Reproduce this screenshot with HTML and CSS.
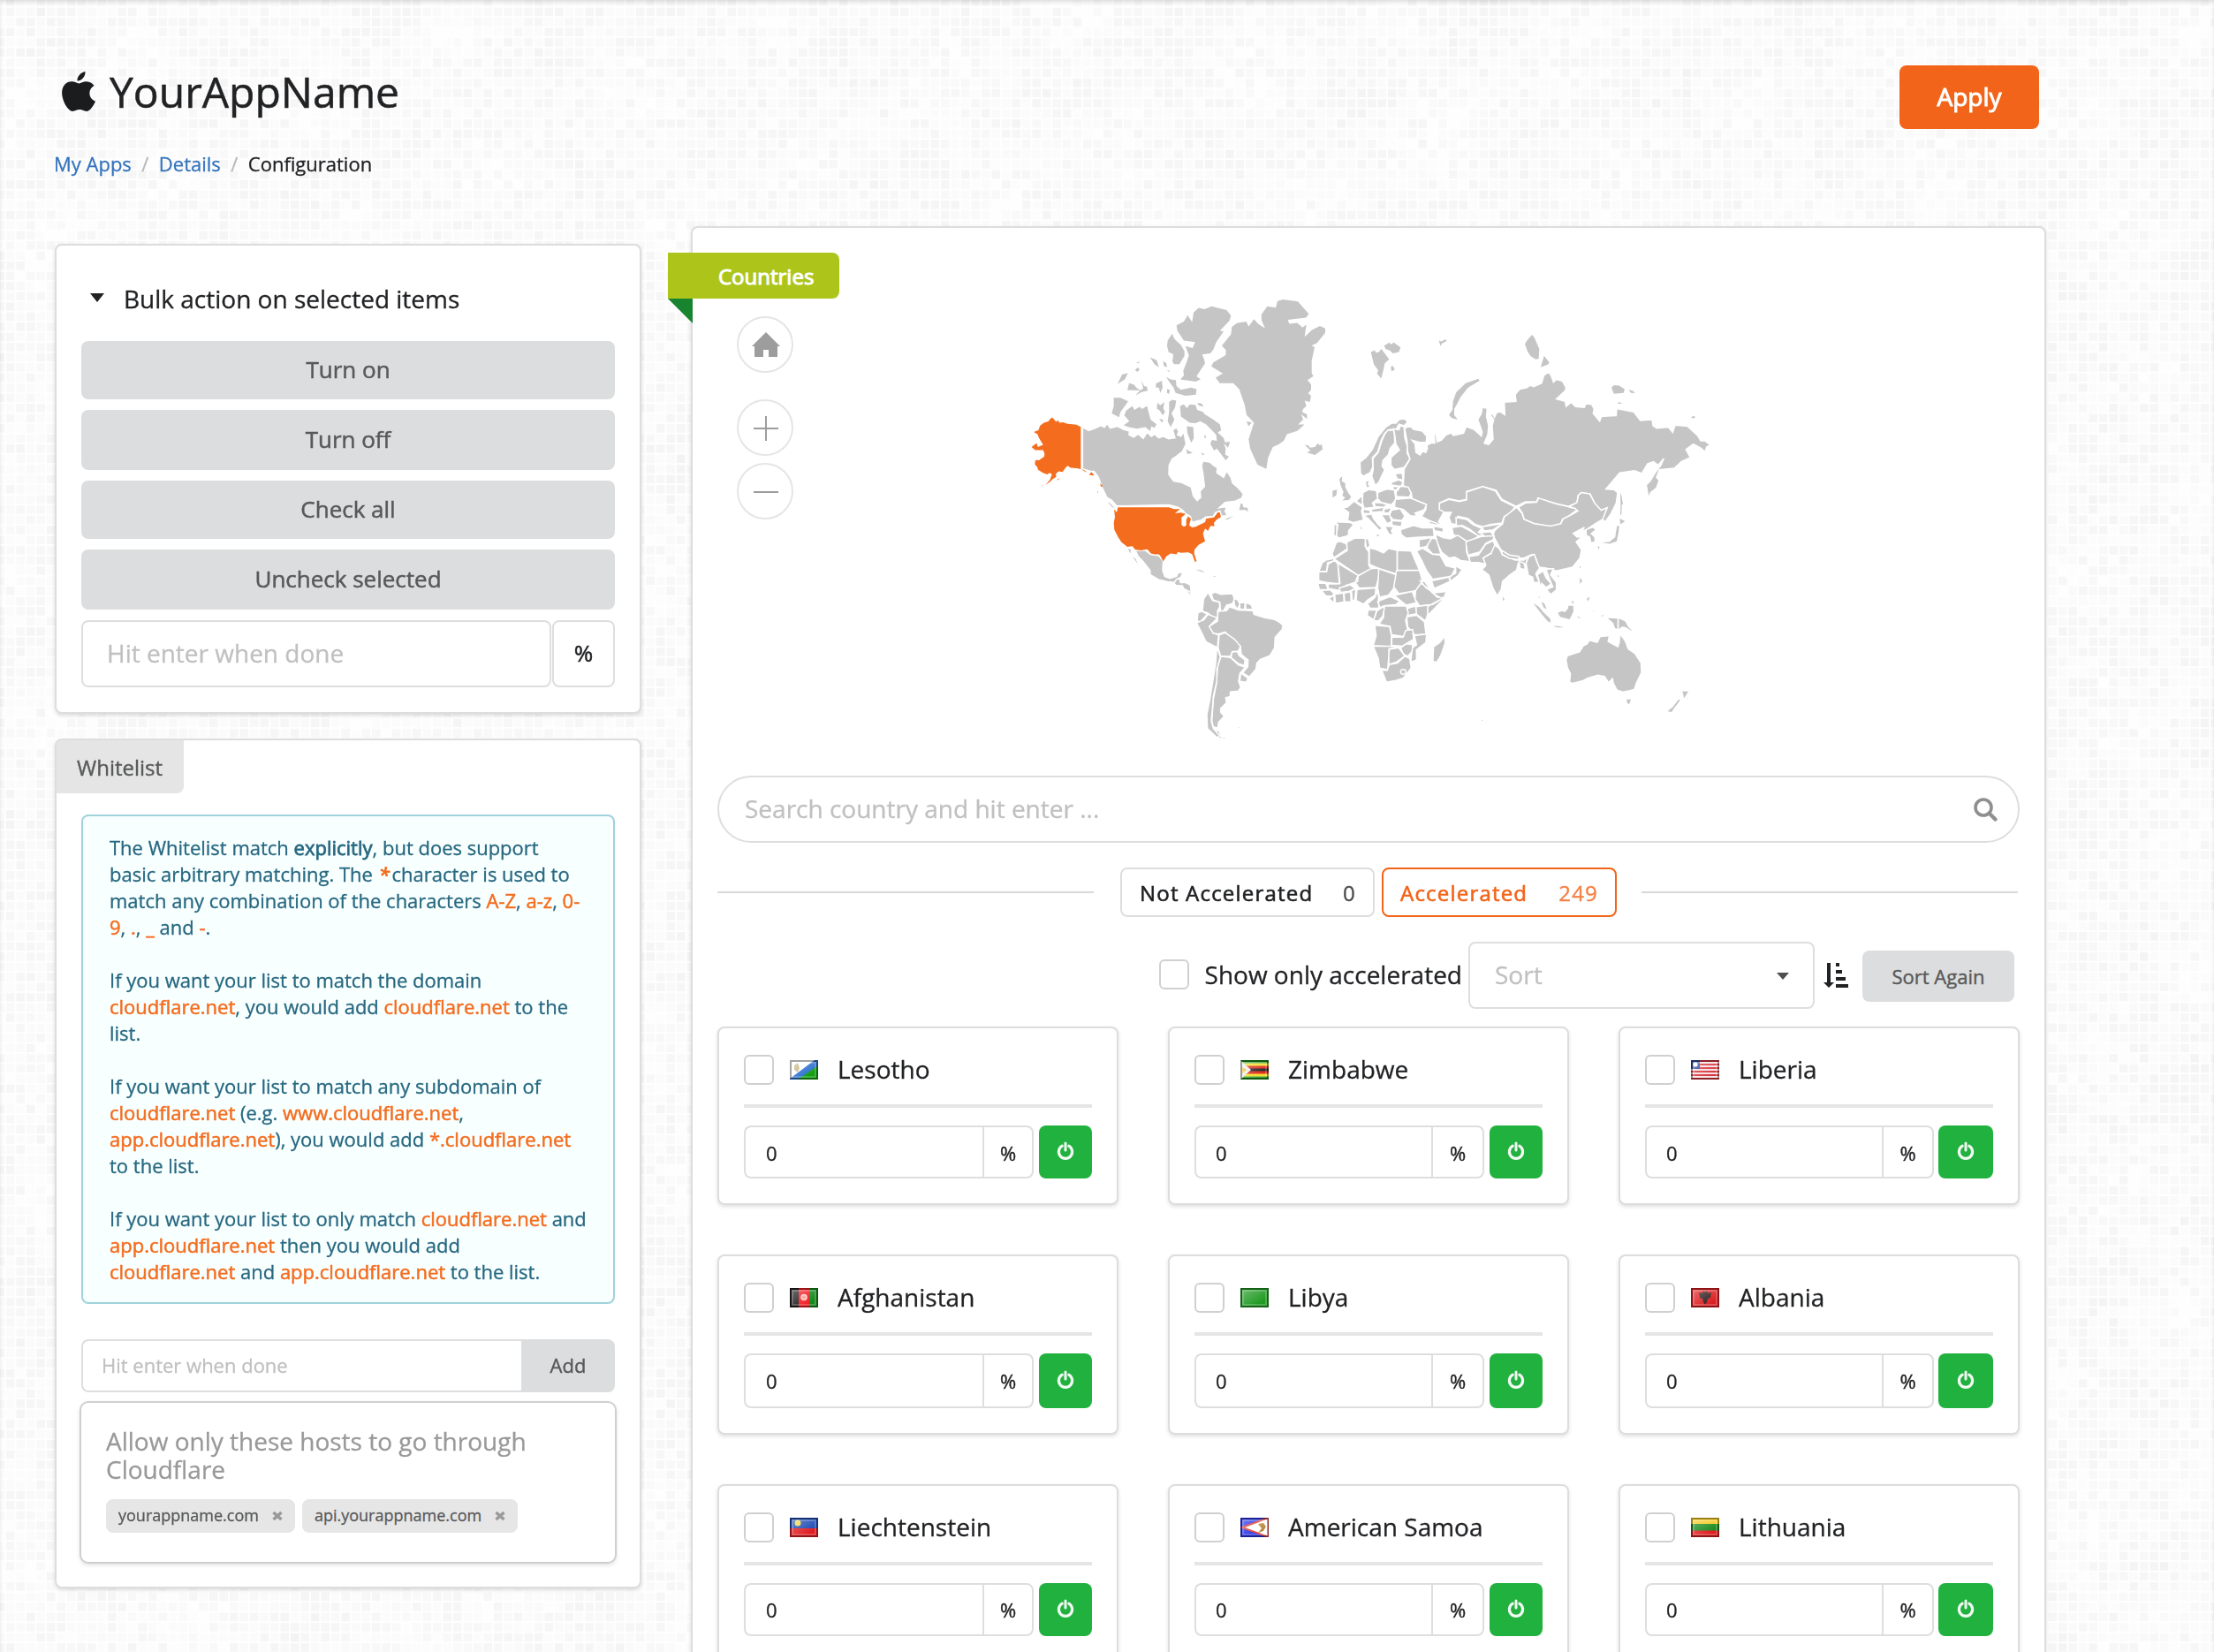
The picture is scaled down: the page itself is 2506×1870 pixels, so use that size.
FILE: index.html
```html
<!DOCTYPE html>
<html lang="en">
<head>
<meta charset="utf-8">
<title>YourAppName - Configuration</title>
<link rel="stylesheet" href="styles.css">
</head>
<body>
<canvas class="texture" width="2506" height="1870"></canvas>
<svg class="defs" width="0" height="0">
  <defs>
    <linearGradient id="shine" x1="0" y1="0" x2="1" y2="1"><stop offset="0" stop-color="#fff" stop-opacity=".34"/><stop offset=".8" stop-color="#fff" stop-opacity="0"/></linearGradient>
    <symbol id="gloss" viewBox="0 0 32 22"><rect x="2" y="2" width="28" height="18" fill="url(#shine)"/><path d="M3 3H29V19H3Z" fill="none" stroke="#fff" stroke-opacity=".2" stroke-width="2"/><path d="M1 1H31V21H1Z" fill="none" stroke="#000" stroke-opacity=".36" stroke-width="2"/></symbol>
    <symbol id="power" viewBox="0 0 20 22"><path d="M6.2 5.2A7.6 7.6 0 1 0 13.8 5.2" fill="none" stroke="currentColor" stroke-width="3.2" stroke-linecap="round"/><path d="M10 2V10" stroke="currentColor" stroke-width="3" stroke-linecap="round"/></symbol>
    <symbol id="times" viewBox="0 0 12 12"><path d="M1.5 2L10.500 10M10.500 2L1.500 10" stroke="currentColor" stroke-width="3.600"/></symbol>
  </defs>
</svg>
<div class="page">
  <header class="top">
    <h1 class="title">
      <svg class="apple" viewBox="0 0 38 46"><path d="M26.500 0c.5 5-4 10.800-9 10.600C17 6 21.500.8 26.500 0zM19.500 13.500c2-.2 4.600-2.200 8.300-2.200 3.600.1 6.800 1.900 8.700 4.700-7.700 4.600-6.300 14.500 1.500 17.600-1.500 4.200-5.600 11-9.600 11.300-3.300.3-4.600-1.900-8.300-1.900s-5.200 2-8.200 1.900C5.500 44.800-5 24.500 3 14.900c2.300-2.600 5.400-3.600 8.200-3.600 3.400 0 6.300 2.300 8.300 2.200z"/></svg>
      <span>YourAppName</span>
    </h1>
    <button class="apply">Apply</button>
  </header>
  <nav class="crumbs"><a>My Apps</a><i>/</i><a>Details</a><i>/</i><span>Configuration</span></nav>

  <main class="columns">
    <aside class="side">
      <section class="panel bulk">
        <h2 class="bulk-title"><svg width="16" height="10" viewBox="0 0 16 10"><path d="M0 0H16L8 10Z"/></svg>Bulk action on selected items</h2>
        <div class="bulk-actions">
          <button class="btn">Turn on</button>
          <button class="btn tall">Turn off</button>
          <button class="btn">Check all</button>
          <button class="btn tall">Uncheck selected</button>
          <div class="bulk-input"><div class="field">Hit enter when done</div><div class="unit">%</div></div>
        </div>
      </section>

      <section class="panel white">
        <div class="tab">Whitelist</div>
        <div class="info">
          <p>The Whitelist match <b>explicitly</b>, but does support basic arbitrary matching. The <em class="star">*</em> character is used to match any combination of the characters <em>A-Z</em>, <em>a-z</em>, <em>0-9</em>, <em>.</em>, <em>_</em> and <em>-</em>.</p>
          <p>If you want your list to match the domain <em>cloudflare.net</em>, you would add <em>cloudflare.net</em> to the list.</p>
          <p>If you want your list to match any subdomain of <em>cloudflare.net</em> (e.g. <em>www.cloudflare.net</em>, <em>app.cloudflare.net</em>), you would add <em>*.cloudflare.net</em> to the list.</p>
          <p>If you want your list to only match <em>cloudflare.net</em> and <em>app.cloudflare.net</em> then you would add <em>cloudflare.net</em> and <em>app.cloudflare.net</em> to the list.</p>
        </div>
        <div class="adder"><div class="adder-field">Hit enter when done</div><button class="adder-btn">Add</button></div>
        <div class="hosts">
          <p>Allow only these hosts to go through Cloudflare</p>
          <div class="tags">
            <span class="tag">yourappname.com<svg width="12" height="12"><use href="#times"/></svg></span>
            <span class="tag">api.yourappname.com<svg width="12" height="12"><use href="#times"/></svg></span>
          </div>
        </div>
      </section>
    </aside>

    <section class="panel main">
      <div class="ribbon">Countries</div>
      <div class="map">
        <div class="zoomer">
          <span class="round home"><svg width="32" height="28" viewBox="0 0 32 28"><path d="M16 0L32 16H29V28H19V20H13V28H3V16H0Z"/></svg></span>
          <span class="round"><svg width="28" height="28" viewBox="0 0 28 28"><path d="M13 0h2v13h13v2H15v13h-2V15H0v-2h13z"/></svg></span>
          <span class="round"><svg width="28" height="28" viewBox="0 0 28 28"><path d="M0 13h28v2H0z"/></svg></span>
        </div>
        <svg class="world" viewBox="0 0 2460 1568" preserveAspectRatio="none">
          <g class="isle">
            <path d="M738 778L770 766L750 778ZM788 748L793 725L800 728L802 738L816 740L818 753L808 746ZM340 720L350 726L366 742L355 736Z"/>
            <path d="M587 405L600 400L610 412L620 400L640 402L645 418L665 425L670 432L680 438L700 450L722 465L727 485L715 492L735 510L740 525L757 523L750 542L735 528L742 545L740 565L753 572L742 584L725 562L712 545L703 552L690 530L695 517L712 520L710 500L695 485L675 465L655 455L640 462L620 460L605 450L590 440ZM645 395L660 397L667 407L652 404Z"/>
            <path d="M610 472L632 475L634 510L625 526L612 495ZM608 548L630 560L612 563ZM658 558L670 563L664 568ZM668 500L676 505L672 513Z"/>
            <path d="M396 468L415 455L398 436L403 422L425 405L432 418L450 408L458 415L475 405L480 425L487 450L507 465L500 478L490 472L485 488L470 475L440 480L410 474Z"/>
            <path d="M362 378L385 378L411 390L400 405L385 425L380 442L355 430L362 405Z"/>
            <path d="M510 395L520 403L534 393L530 412L536 425L528 436L518 420L508 414ZM550 392L560 385L574 388L570 410L558 430L568 450L555 475L545 455L550 425ZM516 448L530 450L526 460Z"/>
            <path d="M414 330L430 335L440 346L453 354L408 353ZM455 320L465 340L475 342L477 355L455 360L435 372L450 355L462 348ZM375 333L390 302L410 297L400 317ZM505 332L525 322L528 345L520 362L515 345L505 345ZM543 350L552 352L550 366L543 362ZM434 287L444 279L450 285L442 293ZM438 263L446 259L450 264ZM485 245L508 255L515 278L500 268ZM530 258L540 264L543 278L532 274ZM541 288L553 290L550 293Z"/>
            <path d="M540 310L555 318L573 320L575 340L590 352L625 345L643 350L641 368L605 372L572 362L565 345L550 325Z"/>
            <path d="M545 190L560 168L568 185L590 205L602 225L602 240L585 268L567 268L561 260L564 235L548 228L543 208Z"/>
            <path d="M575 140L600 128L613 107L628 130L633 98L650 83L670 87L694 78L745 90L760 108L755 125L722 158L735 160L710 195L700 220L690 232L662 236L668 250L672 265L655 290L643 308L657 317L640 325L588 318L600 305L598 290L610 260L617 238L605 208L630 215L638 195L600 190L578 158Z"/>
            <path d="M918 60L936 55L987 62L1024 102L1015 115L953 122L958 135L985 132L1003 147L1016 138L1010 178L1035 155L1062 142L1080 150L1080 165L1052 198L1034 207L1044 212L1034 258L1034 297L1040 307L1020 320L1032 335L1032 352L1022 364L1032 372L1028 392L1010 388L1016 405L1005 415L1001 425L1018 433L1018 448L998 432L1005 450L988 466L1010 466L985 487L950 498L940 518L925 530L902 540L886 575L880 612L850 598L825 545L820 515L838 460L828 450L813 435L806 400L788 350L768 330L722 330L708 312L732 298L693 275L700 262L742 238L743 222L729 207L760 170L763 145L780 133L812 128L820 144L838 120L852 135L876 150L864 125L863 105L883 78L912 82ZM813 455L831 460L819 472Z"/>
            <path d="M1010 532L1024 536L1028 542L1045 540L1055 528L1062 535L1068 530L1071 548L1045 566L1018 558L1030 552Z"/>
            <path d="M410 874L420 878L418 890ZM425 900L436 908L444 925ZM640 942L660 946L672 953L655 949ZM700 963L710 965L702 967ZM784 1461L788 1461L786 1464ZM613 1013L624 1023L618 1022ZM705 1472L718 1475L726 1496L705 1490ZM735 1495L740 1497L733 1498Z"/>
            <path d="M567 985L574 974L585 978L586 988L605 988L620 995L622 1014L602 1005L596 994L575 993Z"/>
          </g>
          <g class="land">
            <path d="M256 475L277 486L300 478L318 470L330 475L340 463L350 478L375 472L395 482L415 488L414 500L430 508L445 497L462 512L475 492L490 505L500 498L515 510L530 505L548 513L570 510L562 485L575 475L583 490L578 500L590 505L600 490L605 518L608 530L595 555L575 570L560 580L550 600L549 630L565 652L590 656L625 672L632 700L645 716L657 706L655 685L670 670L665 630L660 600L665 586L690 590L700 600L714 608L712 625L735 640L745 618L760 640L765 658L785 675L802 694L797 708L775 718L740 722L720 740L738 737L745 740L740 750L748 766L728 767L722 750L708 755L700 768L675 770L660 780L640 785L628 788L622 768L607 760L596 748L580 738L550 730L372 734L355 715L338 705L320 668L310 640L295 620L283 620L256 612Z"/>
            <path d="M435 880L470 880L487 893L500 895L515 897L530 915L528 945L535 965L552 972L575 965L580 955L597 950L590 968L575 975L568 985L545 983L515 976L486 960L485 945L460 915L445 900Z"/>
            <path d="M682 1018L692 1035L698 1045L720 1050L722 1065L714 1080L716 1100L700 1100L680 1085L663 1080L667 1040Z"/>
            <path d="M693 1022L707 1017L725 1024L765 1022L772 1040L765 1055L745 1060L735 1078L725 1080L722 1050L700 1043Z"/>
            <path d="M770 1038L782 1042L790 1056L782 1074L772 1060ZM790 1052L808 1052L806 1074L790 1072ZM810 1052L828 1058L835 1074L810 1073Z"/>
            <path d="M648 1085L660 1080L680 1090L665 1105L655 1117L645 1110Z"/>
            <path d="M643 1118L668 1108L682 1090L714 1102L688 1128L700 1152L718 1158L714 1200L675 1180L655 1140Z"/>
            <path d="M716 1080L745 1078L755 1065L785 1076L835 1078L838 1090L875 1101L905 1106L925 1116L936 1126L934 1140L910 1165L908 1200L892 1226L860 1238L848 1250L845 1270L822 1296L800 1282L817 1262L818 1240L795 1222L792 1195L760 1168L740 1148L718 1155L700 1152L686 1130L714 1112Z"/>
            <path d="M720 1158L740 1150L772 1172L792 1195L785 1212L765 1212L758 1228L725 1228L716 1200Z"/>
            <path d="M764 1214L782 1212L787 1225L808 1240L805 1258L785 1252L760 1232Z"/>
            <path d="M726 1228L758 1232L785 1256L808 1264L790 1285L786 1310L793 1330L785 1342L758 1345L757 1360L742 1364L745 1380L725 1400L725 1412L737 1425L718 1445L715 1464L700 1460L695 1440L700 1370L710 1320L715 1260Z"/>
            <path d="M793 1283L818 1300L812 1313L790 1310Z"/>
            <path d="M712 1198L724 1230L712 1270L712 1310L700 1360L697 1400L693 1440L700 1465L722 1490L712 1495L680 1465L678 1420L688 1370L700 1300L708 1250Z"/>
          </g>
          <g class="hot">
            <path d="M153 443L160 450L166 457L172 452L178 460L190 459L205 464L222 465L235 467L250 474V613L236 610L215 608L206 602L200 606L188 622L176 620L165 628L167 638L155 645L145 655L130 665L145 648L152 630L145 625L135 630L120 624L105 615L102 606L94 597L96 583L108 584L126 571L127 562L122 550L95 550L83 540L100 527L104 540L122 533L108 510L103 498L90 491L106 485L112 470L125 460L140 456L146 448ZM168 650L174 643L177 645ZM278 632L286 622L296 634ZM252 612L262 616L272 624L262 620ZM314 660L325 668L320 672ZM306 684L309 688L307 691ZM188 612L195 598L200 602L194 610ZM118 666L122 667L119 669Z"/>
            <path d="M376 738L549 738L566 744L587 744L570 758L590 756L606 760L592 772L592 796L600 802L608 798L608 780L614 768L624 775L618 798L628 804L640 802L660 793L672 787L676 775L702 772L716 754L722 755L726 770L712 778L702 790L704 800L690 800L682 816L672 808L665 825L672 850L650 862L636 878L635 890L643 915L638 918L628 892L615 886L590 888L580 885L575 893L555 890L540 900L530 916L520 898L515 893L500 893L488 890L476 876L455 880L435 878L425 866L408 868L388 853L376 835L364 812L362 790L366 770L363 745L372 755Z"/>
          </g>
          <g transform="translate(960 0)">
            <g class="isle">
              <path d="M275 228L288 222L292 230L303 228L310 217L337 252L322 265L318 285L310 315L296 298L300 288L285 268ZM320 207L338 197L345 203L352 196L376 213L370 228L350 232L338 222L325 218ZM343 275L350 274L356 285L345 292ZM506 190L515 193L528 186L532 192L516 200L511 208Z"/>
              <path d="M798 202L805 190L822 171L830 180L847 218L845 250L835 252L818 242L808 228ZM863 240L881 262L878 268L852 278Z"/>
              <path d="M540 435L552 418L554 390L565 360L597 330L640 316L644 322L605 345L580 375L567 400L558 415L558 435L570 450L550 445Z"/>
              <path d="M1092 345L1100 337L1118 338L1137 350L1133 362L1100 365ZM1150 352L1165 356L1172 363L1158 362ZM1112 398L1118 392L1128 398ZM1362 443L1370 438L1378 442L1370 446Z"/>
              <path d="M1008 812L1030 806L1036 812L1020 825L1034 838L1034 850L1024 853L1020 835L1008 828ZM1058 854L1085 852L1105 836L1108 815L1112 798L1118 800L1117 815L1110 850L1085 858ZM1120 775L1138 784L1122 794ZM1045 865L1052 869L1048 877ZM1122 690L1126 700L1131 728L1127 730L1126 760L1122 765L1123 730ZM984 930L988 935L984 940ZM984 970L993 980L985 990ZM1008 1042L1014 1032L1017 1037L1012 1047ZM722 1032L729 1040L724 1046ZM908 962L916 964L910 967Z"/>
              <path d="M826 1053L845 1065L860 1082L884 1105L886 1118L875 1112L856 1090ZM892 1128L912 1129L930 1133L910 1133ZM854 1050L864 1054L872 1074L862 1068ZM910 1085L922 1080L935 1082L945 1070L946 1062L962 1062L963 1080L950 1106L918 1098ZM955 1048L962 1046L964 1056ZM975 1095L988 1103L980 1102ZM845 1030L850 1036L846 1036ZM1030 1078L1034 1080L1030 1081ZM1057 1093L1067 1094L1060 1097Z"/>
              <path d="M1080 1103L1112 1104V1138L1104 1135L1098 1118L1085 1108ZM1117 1104L1138 1113L1148 1130L1164 1146L1140 1132L1128 1130L1117 1138Z"/>
              <path d="M940 1240L944 1228L985 1215L998 1195L1010 1190L1018 1178L1045 1185L1055 1165L1082 1163L1078 1180L1115 1200L1120 1185L1123 1160L1138 1180L1147 1205L1170 1220L1190 1250L1192 1280L1175 1315L1168 1335L1148 1340L1130 1343L1112 1337L1100 1315L1097 1297L1082 1311L1070 1292L1045 1288L1010 1298L995 1306L960 1315L952 1312L955 1285L945 1265ZM1143 1370L1158 1370L1152 1385L1146 1382Z"/>
              <path d="M1333 1343L1353 1344L1338 1366L1336 1354ZM1282 1408L1300 1395L1320 1370L1325 1373L1305 1398L1296 1411ZM524 1168L525 1185L510 1225L498 1245L488 1243L490 1198L510 1185ZM650 1438L656 1438L653 1441Z"/>
              <path d="M168 645L178 636L176 652L188 660L188 672L198 690L208 704L200 714L178 716L188 706L178 700L182 688L172 665ZM145 684L160 680L158 698L145 706ZM292 830L304 828L300 834ZM240 800L245 812L240 808ZM258 655L268 652L264 662L270 670L262 672Z"/>
            </g>
            <g class="land">
              <path d="M238 590L258 575L280 548L300 505L325 475L345 462L360 462L372 449L390 447L400 458L388 470L370 465L360 484L340 482L322 495L310 518L298 557L280 575L282 605L272 625L250 636L240 628Z"/>
              <path d="M332 485L352 485L355 500L356 527L340 545L335 565L316 585L313 602L322 615L312 635L303 655L290 667L278 635L283 615L282 578L300 558L312 520L322 498Z"/>
              <path d="M352 480L370 484L376 468L388 475L390 510L400 540L398 560L408 578L388 607L355 614L343 600L343 575L372 550L360 530L356 500Z"/>
              <path d="M398 474L412 474L420 482L450 488L465 505L463 525L440 525L415 518L425 530L428 558L442 566L450 555L462 558L467 545L465 535L480 526L492 527L490 500L496 497L500 523L515 517L530 500L548 494L555 502L590 495L598 473L625 482L650 504L653 490L638 450L650 430L653 410L670 412L668 440L675 470L672 500L660 528L675 532L690 515L687 470L692 450L680 435L688 430L695 442L702 427L715 424L730 434L728 393L768 390L765 368L780 350L805 345L815 337L828 342L855 330L862 305L880 293L890 312L895 327L905 318L925 323L938 345L935 355L905 382L935 390L938 407L955 393L970 407L1000 410L1005 398L1025 400L1033 415L1030 430L1052 455L1058 440L1090 438L1108 437L1110 414L1168 425L1190 453L1230 450L1233 470L1245 478L1285 475L1300 492L1308 468L1350 472L1385 503L1395 520L1410 520L1428 533L1415 540L1410 556L1395 543L1370 530L1345 548L1360 575L1330 588L1305 610L1255 615L1245 640L1254 650L1245 675L1225 690L1218 709L1210 665L1225 650L1240 625L1260 600L1270 578L1250 600L1235 588L1215 595L1195 627L1170 618L1120 625L1073 678L1100 680L1113 690L1108 725L1090 760L1070 787L1060 775L1077 740L1055 748L1035 725L1020 695L990 690L978 700L975 725L945 735L900 725L842 708L838 720L800 720L768 735L720 712L700 682L655 670L600 686L600 712L575 717L540 710L508 724L508 745L524 752L505 785L514 800L470 780L447 768L462 745L462 728L415 710L412 690L385 665L388 612L408 580L400 555L398 520L390 480Z"/>
              <path d="M508 725L540 712L575 719L600 714L600 688L655 670L698 685L718 715L765 737L745 760L728 768L720 790L680 795L655 802L630 795L605 775L570 768L564 795L548 792L540 772L548 755L525 755L508 746Z"/>
              <path d="M564 772L600 778L622 795L652 808L640 820L657 830L640 832L610 810L585 798L566 800ZM550 805L582 800L605 812L642 833L620 845L598 850L575 837L555 828ZM652 802L722 792L690 812L660 816ZM648 822L682 818L692 832L662 842Z"/>
              <path d="M776 738L800 724L838 722L845 708L900 726L945 736L977 745L950 765L925 778L920 792L885 802L830 792L795 777L790 758Z"/>
              <path d="M770 738L788 758L795 778L830 792L885 800L920 792L928 776L952 765L978 750L968 742L948 736L975 722L980 698L990 690L1018 694L1035 725L1057 748L1077 740L1062 778L1040 790L1010 810L990 818L1000 804L962 824L975 836L993 834L972 852L990 878L985 905L960 935L905 947L870 938L845 935L835 905L822 893L795 905L760 905L725 890L712 870L690 830L695 815L722 793L728 770Z"/>
              <path d="M690 858L712 875L722 895L765 912L795 912L805 905L812 900L800 925L775 922L770 945L745 962L722 982L718 1008L704 1030L690 1005L675 960L652 943L665 930L656 905L684 890Z"/>
              <path d="M720 880L745 895L778 900L778 910L745 906L720 892ZM778 915L795 922L800 942L782 940Z"/>
              <path d="M608 900L640 895L665 860L690 848L696 862L684 888L656 905L664 925L640 920L612 920Z"/>
              <path d="M596 852L625 842L650 834L694 832L690 845L665 857L645 885L605 896Z"/>
              <path d="M495 826L520 838L545 842L570 830L598 848L600 885L612 917L580 913L560 902L540 905L515 885L498 850Z"/>
              <path d="M802 922L812 900L830 893L838 915L848 938L835 957L847 985L828 985L824 968L810 962ZM840 960L860 948L870 970L888 990L870 1002L855 988L850 1002L845 975ZM870 942L895 940L885 960L905 985L905 1010L885 1025L872 1008L893 1000L880 970Z"/>
              <path d="M178 740L195 738L218 718L247 738L243 752L250 780L215 788L196 782L200 755ZM148 786L205 788L217 795L200 815L198 832L165 840L158 830L163 795ZM150 795L160 795L158 835L149 830Z"/>
              <path d="M248 690L268 680L294 683L298 710L280 724L287 738L252 742L246 722ZM298 690L330 678L355 682L360 712L345 730L310 722L298 710ZM225 718L246 698L246 732Z"/>
              <path d="M356 628L382 626L384 648L365 645ZM343 657L370 648L384 655L378 670L346 665ZM348 670L374 670L365 684L352 680ZM360 682L375 668L402 672L412 692L405 705L362 703Z"/>
              <path d="M358 712L410 708L464 730L455 747L425 757L432 768L410 766L400 758L385 745L355 738ZM345 748L375 743L390 768L380 782L350 778L338 765Z"/>
              <path d="M285 722L312 724L330 730L320 738L290 736ZM275 745L318 738L320 752L280 755ZM318 745L348 738L336 757L315 757ZM248 745L272 748L272 760L250 758ZM310 762L338 762L346 785L330 792ZM345 782L382 785L378 802L348 798ZM322 800L352 802L345 815L352 832L335 825Z"/>
              <path d="M250 765L278 760L284 775L300 795L315 808L303 814L285 795L265 775Z"/>
              <path d="M376 812L420 798L450 806L487 806L490 834L430 837L395 840L378 828ZM470 782L498 790L512 800L475 792ZM488 800L520 806L522 820L490 815Z"/>
              <path d="M438 845L482 838L465 867L440 872ZM440 872L465 868L440 888ZM463 868L482 840L497 842L513 892L485 892Z"/>
              <path d="M430 882L450 873L485 893L510 895L530 930L562 938L548 965L485 975L465 948L445 908ZM481 980L540 968L544 982L490 1005ZM563 930L585 943L572 962L545 982L542 966L563 955Z"/>
              <path d="M158 853L172 850L192 858L195 874L150 904L143 892ZM122 912L150 906L150 915L128 920L125 948L98 950L110 920Z"/>
              <path d="M193 853L220 840L257 840L255 865L268 885L268 930L277 940L232 962L150 908L195 880ZM255 838L267 843L272 865L260 874Z"/>
              <path d="M270 872L290 876L318 888L335 873L364 880L364 958L298 938L270 925ZM365 880L412 882L424 910L440 945L365 945Z"/>
              <path d="M98 950L125 950L130 925L152 912L163 925L168 990L125 985L98 980ZM163 922L232 962L230 982L190 995L168 1012L130 1005L130 990L170 988ZM230 965L275 940L300 938L304 960L292 1002L235 1004L222 985Z"/>
              <path d="M302 940L360 960L352 1005L335 1027L305 1034L298 1005ZM362 946L440 946L450 980L430 1012L370 1022L353 1000ZM355 1028L415 1015L430 1052L395 1060L372 1042Z"/>
              <path d="M427 1012L445 988L470 1005L500 1034L522 1036L485 1058L440 1062L425 1040ZM485 1020L532 1015L520 1042L468 1094L466 1065L518 1038L500 1030ZM443 980L458 982L485 1018L462 1002Z"/>
              <path d="M428 1065L468 1060L468 1090L460 1112L430 1090ZM400 1070L427 1063L430 1088L398 1094ZM397 1098L430 1093L457 1115L462 1155L425 1158L400 1132Z"/>
              <path d="M320 1062L395 1063L402 1085L393 1110L400 1140L387 1163L345 1157L340 1130L303 1122L318 1100ZM298 1048L340 1032L374 1047L360 1058L320 1062L306 1068ZM263 1055L288 1035L300 1010L302 1070L272 1070ZM228 1008L292 1003L290 1027L265 1042L250 1057L225 1044Z"/>
              <path d="M265 1076L295 1075L285 1108L263 1094ZM296 1078L322 1063L315 1097L300 1112L284 1110ZM288 1126L338 1130L345 1160L345 1196L283 1193L293 1160Z"/>
              <path d="M346 1165L385 1165L393 1143L417 1140L420 1172L380 1195L346 1192ZM423 1160L464 1155L462 1183L430 1207L430 1240L410 1248L416 1200L430 1190ZM376 1200L395 1187L417 1190L415 1212L400 1228L385 1220Z"/>
              <path d="M283 1195L375 1195L338 1203L332 1272L305 1267L300 1235ZM336 1205L370 1200L390 1227L360 1248L336 1255ZM312 1274L330 1274L338 1255L365 1250L390 1228L407 1235L412 1267L385 1300L360 1307L328 1313Z"/>
              <path d="M95 988L122 988L130 1010L100 1008ZM108 1012L135 1008L150 1022L140 1034L120 1028ZM125 1030L150 1030L150 1054ZM152 1024L182 1020L184 1050L155 1054ZM184 1020L206 1016L208 1048L186 1050ZM168 1003L205 993L222 1006L200 1015L172 1018ZM209 1012L224 1006L220 1044L212 1045Z"/>
            </g>
            <ellipse cx="385" cy="1279" rx="9" ry="8" class="ring"/>
          </g>
        </svg>
      </div>
      <div class="search"><span>Search country and hit enter ...</span><svg width="27" height="27" viewBox="0 0 27 27"><circle cx="11" cy="11" r="9" fill="none" stroke="currentColor" stroke-width="3.600"/><path d="M17.500 17.500L24.500 24.500" stroke="currentColor" stroke-width="4.200" stroke-linecap="round"/></svg></div>
      <div class="stats"><button class="stat">Not Accelerated<b>0</b></button><button class="stat on">Accelerated<b>249</b></button></div>
      <div class="tools">
        <span class="check"></span><span class="tools-label">Show only accelerated</span>
        <div class="select">Sort<svg width="14" height="8" viewBox="0 0 14 8"><path d="M0 0H14L7 8Z"/></svg></div>
        <svg class="sort-icon" width="28" height="28" viewBox="0 0 28 28"><path d="M4 0h4v22h4L6 28L0 22h4zM14 0h4v4h-4zM14 8h7v4h-7zM14 16h11v4h-11zM14 24h14v4H14z"/></svg>
        <button class="again">Sort Again</button>
      </div>
      <div class="cards">
        <article class="card">
          <div class="card-head"><span class="check"></span><svg class="flag" viewBox="0 0 32 22"><rect width="32" height="22" fill="#fff"/><path d="M32 0V22H0Z" fill="#12a012"/><path d="M32 0V6L9 22H0V21L28 0Z" fill="#2c6fd0"/><path d="M5 6l4-3 2 6-2 5-4-3z" fill="#c9b98a"/><use href="#gloss"/></svg><span>Lesotho</span></div>
          <div class="card-row"><div class="num">0</div><div class="pct">%</div><button class="power"><svg width="20" height="22"><use href="#power"/></svg></button></div>
        </article>
        <article class="card">
          <div class="card-head"><span class="check"></span><svg class="flag" viewBox="0 0 32 22"><rect width="32" height="22" fill="#168a16"/><path d="M0 3.500H32V18.500H0Z" fill="#f4e02a"/><path d="M0 6.500H32V15.500H0Z" fill="#dd2a22"/><path d="M0 9.500H32V12.500H0Z" fill="#222"/><path d="M0 0L12 11L0 22Z" fill="#eee"/><path d="M2 8l5 3-5 4z" fill="#eec32d"/><use href="#gloss"/></svg><span>Zimbabwe</span></div>
          <div class="card-row"><div class="num">0</div><div class="pct">%</div><button class="power"><svg width="20" height="22"><use href="#power"/></svg></button></div>
        </article>
        <article class="card">
          <div class="card-head"><span class="check"></span><svg class="flag" viewBox="0 0 32 22"><rect width="32" height="22" fill="#f4dfe0"/><path d="M0 1H32M0 5H32M0 9H32M0 13H32M0 17H32M0 21H32" stroke="#d8343c" stroke-width="2"/><rect width="10" height="10" fill="#2c4a9c"/><circle cx="5" cy="5" r="2.600" fill="#fff"/><use href="#gloss"/></svg><span>Liberia</span></div>
          <div class="card-row"><div class="num">0</div><div class="pct">%</div><button class="power"><svg width="20" height="22"><use href="#power"/></svg></button></div>
        </article>
        <article class="card">
          <div class="card-head"><span class="check"></span><svg class="flag" viewBox="0 0 32 22"><rect width="32" height="22" fill="#222"/><rect x="10" width="12" height="22" fill="#f11f24"/><rect x="22" width="10" height="22" fill="#148a1c"/><circle cx="16" cy="10.500" r="3" fill="#f9a09a" stroke="#ffd0cc" stroke-width="1.500"/><use href="#gloss"/></svg><span>Afghanistan</span></div>
          <div class="card-row"><div class="num">0</div><div class="pct">%</div><button class="power"><svg width="20" height="22"><use href="#power"/></svg></button></div>
        </article>
        <article class="card">
          <div class="card-head"><span class="check"></span><svg class="flag" viewBox="0 0 32 22"><rect width="32" height="22" fill="#1f9a22"/><use href="#gloss"/></svg><span>Libya</span></div>
          <div class="card-row"><div class="num">0</div><div class="pct">%</div><button class="power"><svg width="20" height="22"><use href="#power"/></svg></button></div>
        </article>
        <article class="card">
          <div class="card-head"><span class="check"></span><svg class="flag" viewBox="0 0 32 22"><rect width="32" height="22" fill="#dd1f22"/><path d="M9 5l4 1 1-3 2 2 2-2 1 3 4-1-1 6-3 1-1 4-2 3-2-3-1-4-3-1z" fill="#332222"/><use href="#gloss"/></svg><span>Albania</span></div>
          <div class="card-row"><div class="num">0</div><div class="pct">%</div><button class="power"><svg width="20" height="22"><use href="#power"/></svg></button></div>
        </article>
        <article class="card">
          <div class="card-head"><span class="check"></span><svg class="flag" viewBox="0 0 32 22"><rect width="32" height="12" fill="#1d4bb4"/><rect y="12" width="32" height="10" fill="#e01e22"/><circle cx="9" cy="6" r="3.500" fill="#f0d84a"/><use href="#gloss"/></svg><span>Liechtenstein</span></div>
          <div class="card-row"><div class="num">0</div><div class="pct">%</div><button class="power"><svg width="20" height="22"><use href="#power"/></svg></button></div>
        </article>
        <article class="card">
          <div class="card-head"><span class="check"></span><svg class="flag" viewBox="0 0 32 22"><rect width="32" height="22" fill="#2a34e6"/><path d="M2 11L32 0V22Z" fill="#fff" stroke="#e03a34" stroke-width="2"/><path d="M20 7l6-1 3 4-3 5-6 2 4-5z" fill="#b98a3c"/><use href="#gloss"/></svg><span>American Samoa</span></div>
          <div class="card-row"><div class="num">0</div><div class="pct">%</div><button class="power"><svg width="20" height="22"><use href="#power"/></svg></button></div>
        </article>
        <article class="card">
          <div class="card-head"><span class="check"></span><svg class="flag" viewBox="0 0 32 22"><rect width="32" height="8" fill="#f5c81c"/><rect y="7" width="32" height="8" fill="#1a8a1e"/><rect y="14.500" width="32" height="7.500" fill="#e01e22"/><use href="#gloss"/></svg><span>Lithuania</span></div>
          <div class="card-row"><div class="num">0</div><div class="pct">%</div><button class="power"><svg width="20" height="22"><use href="#power"/></svg></button></div>
        </article>
      </div>
    </section>
  </main>
</div>
<script src="texture.js"></script>
</body>
</html>
```
FILE: styles.css
```css
* { box-sizing: border-box; }
body {
  margin: 0;
  height: 1870px;
  overflow: hidden;
  background: #fefefe;
  color: #212224;
  font: 28px/40px "Open Sans", "Noto Sans", sans-serif;
  -webkit-text-stroke: .3px currentColor;
}
h1, h2, p { margin: 0; font-weight: 400; }
button { font-family: inherit; border: 0; margin: 0; padding: 0; }
svg { display: block; fill: currentColor; flex: none; }
.texture { position: absolute; left: 0; top: 0; z-index: -1; }
.defs { position: absolute; }
.page {
  height: 1870px;
  padding: 74px 190px 0 62px;
  overflow: hidden;
  box-shadow: inset 0 3px 5px -1px rgba(34, 36, 38, .16);
}

.top { display: flex; justify-content: space-between; align-items: flex-start; padding-right: 8px; height: 72px; }
.top .title { display: flex; font-size: 48px; line-height: 60px; padding-left: 8px; -webkit-text-stroke: .5px currentColor; }
.apple { width: 38px; height: 46px; margin: 7px 16px 0 0; color: #1b1c1d; }
.apply {
  width: 158px; height: 72px; border-radius: 8px; padding-bottom: 2px;
  background: #f26419; color: #fff; font-size: 28px;
  -webkit-text-stroke: 1px #fff;
}
.crumbs { display: flex; margin: 24px 0 0 -1px; font-size: 22px; line-height: 30px; }
.crumbs a { color: #3574bd; }
.crumbs i { width: 31px; text-align: center; font-style: normal; color: #b9b9b9; }

.columns { display: grid; grid-template-columns: 664px 1534px; gap: 56px; margin-top: 56px; align-items: start; }
.side { display: flex; flex-direction: column; gap: 28px; padding-top: 20px; }
.panel {
  background: #fff;
  border: 2px solid #dddddf;
  border-radius: 8px;
  box-shadow: 0 2px 4px rgba(34, 36, 38, .14);
  padding: 28px;
}

.bulk { padding-top: 40px; }
.bulk-title { display: flex; gap: 22px; padding: 0 0 28px 10px; font-size: 28px; line-height: 40px; }
.bulk-title svg { margin-top: 14px; }
.bulk-actions { display: flex; flex-direction: column; gap: 12px; }
.btn {
  height: 66px; border-radius: 8px; padding-bottom: 2px;
  background: #dcddde; color: #58595a; font-size: 26px;
  -webkit-text-stroke: .5px #58595a;
}
.btn.tall { height: 68px; }
.bulk-input { display: flex; gap: 1px; }
.field, .unit { height: 76px; border: 2px solid #dededf; border-radius: 8px; line-height: 71px; }
.field { flex: 1; padding-left: 27px; color: #c0c0c0; }
.unit { width: 71px; text-align: center; font-size: 26px; -webkit-text-stroke: .5px #212224; }

.white { padding-top: 0; height: 962px; }
.tab {
  width: 144px; height: 60px; margin-left: -28px; padding-left: 23px;
  background: #e5e5e5; border-radius: 5px 0 8px 0;
  color: #58595a; font-size: 24px; line-height: 62px;
  -webkit-text-stroke: .4px #58595a;
}
.info {
  margin-top: 24px; padding: 20px 28px 20px 30px;
  border: 2px solid #a0d2dc; border-radius: 8px;
  background: #f8ffff; color: #276880;
  font-size: 22px; line-height: 30px;
}
.info p + p { margin-top: 30px; }
.info b { font-weight: 400; -webkit-text-stroke: .8px #276880; }
.info em { font-style: normal; color: #f46d1f; -webkit-text-stroke: .5px #f46d1f; }
.info .star { font-style: italic; margin: 0 -3px 0 1px; -webkit-text-stroke: 1px #f46d1f; }
.adder { display: flex; height: 60px; margin-top: 40px; font-size: 22px; }
.adder-field {
  flex: 1; border: 2px solid #dededf; border-right: 0; border-radius: 8px 0 0 8px;
  padding-left: 21px; line-height: 55px; color: #c0c0c0;
}
.adder-btn { width: 106px; padding-bottom: 2px; background: #dcddde; color: #58595a; border-radius: 0 8px 8px 0; font-size: 22px; -webkit-text-stroke: .4px #58595a; }
.hosts {
  height: 184px; margin: 10px -2px 0; padding: 27px 26px 0 28px;
  border: 2px solid #cfcfd0; border-radius: 10px;
  box-shadow: 0 2px 4px rgba(34, 36, 38, .12);
  color: #999; line-height: 32px;
}
.tags { display: flex; gap: 8px; margin-top: 18px; }
.tag {
  display: flex; align-items: center; gap: 15px; height: 38px; padding: 0 14px 2px 14px;
  border-radius: 8px; background: #e6e6e6; color: #58595a; font-size: 18px;
}
.tag svg { color: #9a9a9a; margin-top: 1px; }

.main { position: relative; height: 1700px; }
.ribbon {
  position: absolute; left: -28px; top: 28px; z-index: 1;
  width: 194px; height: 52px; padding-left: 57px;
  background: #adc51a; border-radius: 0 8px 8px 0;
  color: #fff; font-size: 24px; line-height: 54px;
  -webkit-text-stroke: 1px #fff;
}
.ribbon::after {
  content: ""; position: absolute; left: 0; top: 52px;
  border: 14px solid transparent; border-top-color: #198430; border-right-color: #198430;
}
.map { position: relative; height: 592px; padding: 34px 0 0 328px; }
.world { width: 820px; height: 540px; overflow: visible; }
.isle, .land { fill: #c5c5c5; }
.land path { stroke: #fff; stroke-width: 1.500px; vector-effect: non-scaling-stroke; }
.hot { fill: #f46d1f; }
.ring { fill: #c5c5c5; stroke: #fff; stroke-width: 1.400px; vector-effect: non-scaling-stroke; }
.zoomer { position: absolute; left: 22px; top: 72px; display: flex; flex-direction: column; gap: 8px; }
.round {
  display: grid; place-items: center; width: 64px; height: 64px;
  border: 2px solid #e5e5e5; border-radius: 50%; color: #9d9d9d; padding: 2px 0 0 2px;
}
.round.home { margin-bottom: 22px; padding-top: 0; }

.search {
  display: flex; align-items: center; justify-content: space-between;
  height: 76px; padding: 0 23px 2px 29px;
  border: 2px solid #dededf; border-radius: 38px; color: #c0c0c0;
}
.search svg { color: #8f8f8f; margin-top: 3px; }
.stats { display: flex; align-items: center; height: 56px; margin-top: 28px; }
.stats::before, .stats::after { content: ""; flex: 1; height: 2px; background: #d9d9da; }
.stats::before { margin-right: 30px; }
.stats::after { margin: 0 2px 0 28px; }
.stat {
  display: flex; justify-content: space-between; align-items: center;
  width: 288px; height: 56px; padding: 0 19px 0 20px;
  border: 2px solid #dededf; border-radius: 8px; background: #fff;
  color: #212224; font-size: 24px; letter-spacing: 1.200px;
  -webkit-text-stroke: .6px currentColor;
}
.stat b { font-weight: 400; opacity: .8; -webkit-text-stroke: .4px currentColor; }
.stat.on { width: 266px; margin-left: 8px; padding-left: 19px; border-color: #f26419; color: #f26419; }
.tools { display: flex; align-items: center; justify-content: flex-end; height: 76px; margin-top: 28px; padding-right: 6px; }
.check { width: 34px; height: 34px; border: 2px solid #d0d0d1; border-radius: 6px; background: #fff; flex: none; }
.tools > .check { margin-top: -2px; }
.tools-label { margin: -3px 7px 0 18px; }
.select {
  display: flex; align-items: center; justify-content: space-between;
  width: 392px; height: 76px; padding: 0 27px 3px 28px;
  border: 2px solid #dededf; border-radius: 8px; color: #c0c0c0;
}
.select svg { color: #4d4e50; margin-top: 4px; }
.sort-icon { margin: 0 16px 0 10px; }
.again { width: 172px; height: 58px; margin-top: 2px; border-radius: 8px; background: #dcddde; color: #58595a; font-size: 22px; -webkit-text-stroke: .4px #58595a; }

.cards { display: grid; grid-template-columns: repeat(3, 454px); grid-template-rows: 202px 204px 202px; gap: 56px; margin-top: 20px; }
.card {
  padding: 0 28px; background: #fff;
  border: 2px solid #dddddf; border-radius: 8px;
  box-shadow: 0 2px 4px rgba(34, 36, 38, .14);
}
.card-head { display: flex; align-items: center; height: 90px; padding-top: 8px; border-bottom: 4px solid #e5e5e5; line-height: 38px; }
.card-head span:last-child { margin-top: -2px; }
.flag { width: 32px; height: 22px; margin: 0 22px 0 18px; }
.card-row { display: flex; height: 60px; margin-top: 20px; font-size: 22px; line-height: 58px; }
.card:nth-child(n+4):nth-child(-n+6) .card-row { height: 62px; }
.card:nth-child(n+7) .card-row { line-height: 56px; }
.num { width: 270px; padding-left: 23px; border: 2px solid #dededf; border-right: 0; border-radius: 8px 0 0 8px; }
.pct { width: 58px; text-align: center; border: 2px solid #dededf; border-radius: 0 8px 8px 0; -webkit-text-stroke: .4px #212224; }
.power { display: grid; place-items: center; width: 60px; margin-left: auto; padding-bottom: 2px; border-radius: 8px; background: #21b13f; color: #f2fbf3; }
.card:nth-child(3n+2) .num, .card:nth-child(3n) .num { width: 268px; padding-left: 22px; }
.card:nth-child(3n+2) .pct { width: 60px; }
.card:nth-child(3n) .pct { width: 59px; }
.card:nth-child(3n) .power { width: 62px; }
```
FILE: texture.js
```javascript
// Draws the pale woven-block page background.
(function () {
  var canvas = document.querySelector('.texture');
  var ctx = canvas.getContext('2d');
  var seed = 7;
  function rnd() {
    seed = (seed * 16807) % 2147483647;
    return seed / 2147483647;
  }
  var step = 11.5;
  for (var y = 0; y < 165; y++) {
    for (var x = 0; x < 220; x++) {
      var wave = Math.sin(x * 0.31 + y * 0.13) * Math.cos(y * 0.27 - x * 0.09);
      var a = 0.006 + Math.pow(rnd(), 1.4) * 0.038 + wave * 0.007;
      if (a <= 0.003) continue;
      ctx.fillStyle = 'rgba(40,40,45,' + a.toFixed(4) + ')';
      ctx.fillRect(x * step - 4.5, y * step - 2.8, 9.4, 9.4);
    }
  }
})();
```
